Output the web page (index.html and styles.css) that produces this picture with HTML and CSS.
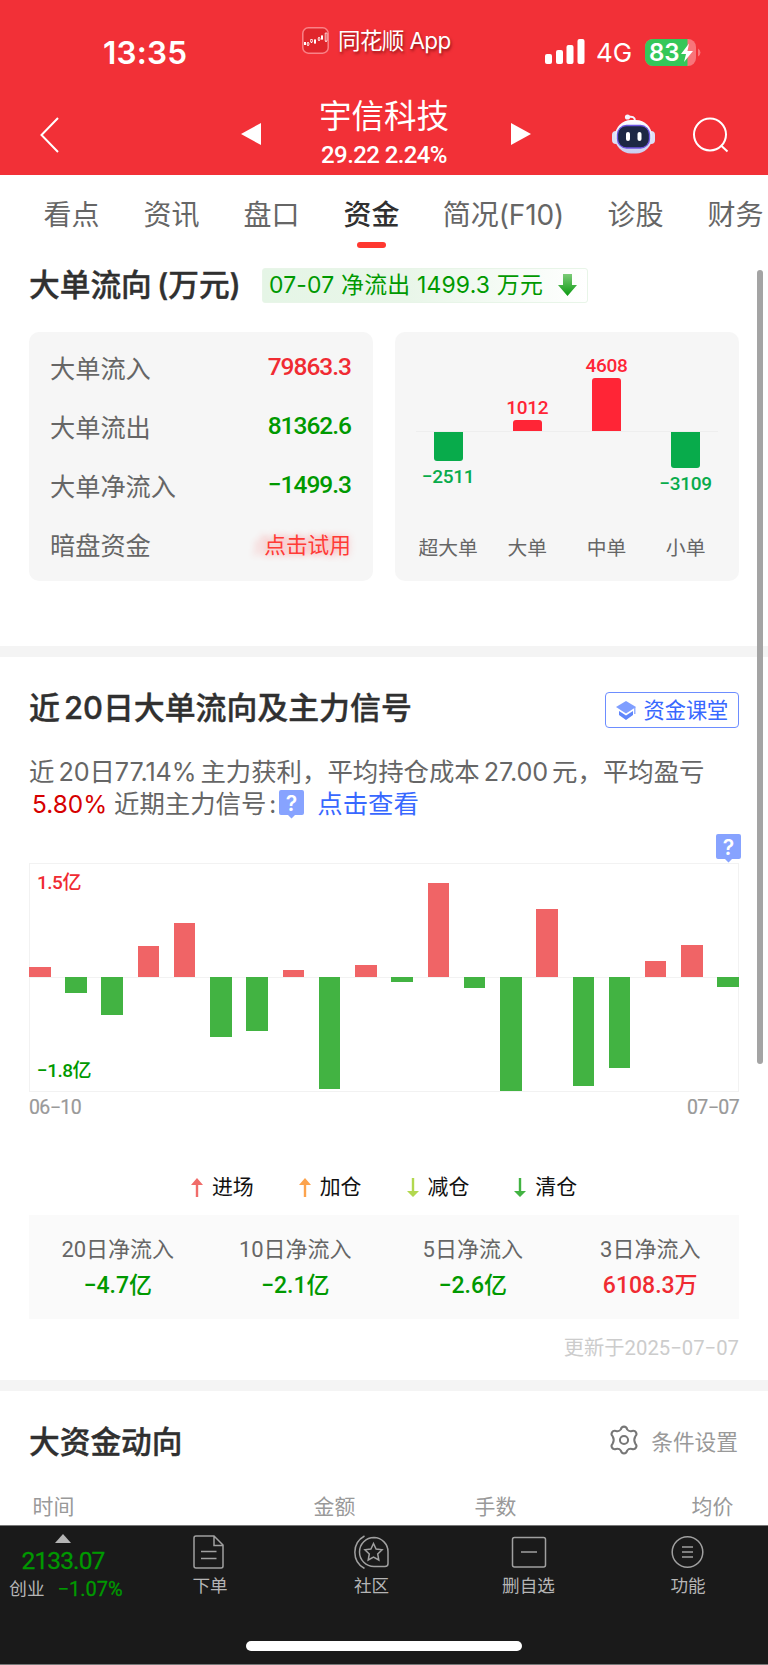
FILE: index.html
```html
<!DOCTYPE html>
<html lang="zh-CN">
<head>
    <meta charset="UTF-8">
    <title>宇信科技 - 资金</title>
    <link rel="stylesheet" href="styles.css">
</head>
<body>
<header class="header">
    <div class="status-bar">
        <div class="time">13:35</div>
        <div class="app-name">
            <svg class="app-logo" width="27" height="27" viewBox="0 0 27 27">
                <rect x=".8" y=".8" width="25.4" height="25.4" rx="5.5" fill="#e0262c" stroke="#fa8287" stroke-width="1.5"/>
                <path d="M3 15v3M6 15v4M9.500 12v4M13 12v5M17 10v4M20 8v5M24 6v9" stroke="#fff" stroke-width="1.2"/>
                <path d="M2 15h2v3h-2zM12 13h2v3h-2zM19 9h2v3h-2z" fill="#fff"/>
                <path d="M5.200 16h1.800v2h-1.800zM8.600 12.500h1.800v2.500h-1.800zM16.200 11h1.800v2h-1.800zM23.200 6h1.800v8h-1.800z" fill="#e0262c" stroke="#fff" stroke-width=".7"/>
            </svg>
            <span>同花顺 App</span>
        </div>
        <div class="signals">
            <svg width="40" height="26" viewBox="0 0 40 26" fill="#fff">
                <rect x="0" y="15" width="7" height="10" rx="2"/>
                <rect x="11" y="11" width="7" height="14" rx="2"/>
                <rect x="21.500" y="6" width="7" height="19" rx="2"/>
                <rect x="32.500" y="0" width="7" height="25" rx="2"/>
            </svg>
            <span class="network">4G</span>
            <svg class="battery" width="56" height="28" viewBox="0 0 56 28">
                <path d="M8 0h35a8 8 0 0 1 8 8v11a8 8 0 0 1-8 8h-35a8 8 0 0 1-8-8v-11a8 8 0 0 1 8-8z" fill="#f8757a"/>
                <path d="M8 0h34.500v27h-34.500a8 8 0 0 1-8-8v-11a8 8 0 0 1 8-8z" fill="#34c759"/>
                <path d="M53 9.500a4.500 4.500 0 0 1 0 8z" fill="#f8757a"/>
                <text x="4" y="22" class="battery-text">83</text>
                <path d="M44 4.500L36 15h5l-2 8 9-11h-5.500z" fill="#fff"/>
            </svg>
        </div>
    </div>
    <div class="nav-bar">
        <svg class="back" width="20" height="36" viewBox="0 0 20 36"><path d="M18 1L1.500 18 18 35" fill="none" stroke="#fff" stroke-width="2"/></svg>
        <svg class="prev" width="20" height="22" viewBox="0 0 20 22"><path d="M20 0v22L0 11z" fill="#fff"/></svg>
        <div class="stock">
            <div class="stock-name">宇信科技</div>
            <div class="stock-price">29.22 2.24%</div>
        </div>
        <svg class="next" width="20" height="22" viewBox="0 0 20 22"><path d="M0 0v22L20 11z" fill="#fff"/></svg>
        <svg class="robot" width="44" height="40" viewBox="0 0 44 40">
            <defs>
                <linearGradient id="face" x1="0" y1="0" x2="0" y2="1">
                    <stop offset="0" stop-color="#fff"/><stop offset="1" stop-color="#c9cdf0"/>
                </linearGradient>
            </defs>
            <path d="M16 3c4-1 7 0 7 4" fill="none" stroke="#f4f4ff" stroke-width="2"/>
            <circle cx="15.500" cy="3" r="2.600" fill="#f4f4ff"/>
            <rect x="0" y="17" width="8" height="13" rx="4" fill="#dcdff7"/>
            <rect x="35" y="17" width="8" height="13" rx="4" fill="#dcdff7"/>
            <rect x="3" y="6" width="37" height="33.500" rx="16" fill="url(#face)"/>
            <rect x="5.500" y="11.500" width="32" height="22.500" rx="9" fill="#1d2744" stroke="#6d55e0" stroke-width="1.300"/>
            <rect x="14" y="18" width="4" height="9" rx="2" fill="#fff"/>
            <rect x="25.500" y="18" width="4" height="9" rx="2" fill="#fff"/>
        </svg>
        <svg class="search" width="38" height="37" viewBox="0 0 38 37" fill="none" stroke="#fff" stroke-width="2">
            <circle cx="18" cy="17.500" r="16"/><path d="M29 28.500l6.500 6"/>
        </svg>
    </div>
</header>

<nav class="tabs">
    <a>看点</a>
    <a>资讯</a>
    <a>盘口</a>
    <a class="active">资金</a>
    <a class="tab-wide">简况(F10)</a>
    <a>诊股</a>
    <a>财务</a>
</nav>

<main class="content">
    <section class="flow">
        <div class="flow-title">
            <h2>大单流向 (万元)</h2>
            <div class="badge">
                <span>07-07 净流出 1499.3 万元</span>
                <svg width="19" height="22" viewBox="0 0 19 22">
                    <defs><linearGradient id="down" x1="0" y1="0" x2="0" y2="1"><stop offset="0" stop-color="#7ccb78"/><stop offset="1" stop-color="#0b9a10"/></linearGradient></defs>
                    <path d="M5 0h9v11h5L9.500 22 0 11h5z" fill="url(#down)"/>
                </svg>
            </div>
        </div>
        <div class="cards">
            <div class="card list">
                <div class="row"><span>大单流入</span><b class="red">79863.3</b></div>
                <div class="row"><span>大单流出</span><b class="green">81362.6</b></div>
                <div class="row"><span>大单净流入</span><b class="green">−1499.3</b></div>
                <div class="row"><span>暗盘资金</span><em class="try">点击试用</em></div>
            </div>
            <div class="card orders">
                <div class="order down"><div class="bar" style="height: 29px"></div><div class="value">−2511</div></div>
                <div class="order up"><div class="value">1012</div><div class="bar" style="height: 11px"></div></div>
                <div class="order up"><div class="value">4608</div><div class="bar" style="height: 53px"></div></div>
                <div class="order down"><div class="bar" style="height: 36px"></div><div class="value">−3109</div></div>
                <div class="order-name">超大单</div>
                <div class="order-name">大单</div>
                <div class="order-name">中单</div>
                <div class="order-name">小单</div>
            </div>
        </div>
    </section>

    <section class="signal">
        <div class="signal-title">
            <h2>近<i></i>20日大单流向及主力信号</h2>
            <a class="lesson">
                <svg width="20" height="19" viewBox="0 0 20 19">
                    <path d="M10 0l10 6-10 6.500L0 6z" fill="#7f9eff"/>
                    <path d="M3 10l7 4.500L17 10v4l-7 5-7-5z" fill="#5f86fb"/>
                    <path d="M18.800 6v7" stroke="#7f9eff" stroke-width="1.200"/>
                </svg>
                <span>资金课堂</span>
            </a>
        </div>
        <p class="summary">
            <span class="summary-line">近<i></i><span class="num">20</span>日<span class="num">77.14%</span><i></i>主力获利，平均持仓成本<i></i><span class="num">27.00</span><i></i>元，平均盈亏</span>
            <span class="summary-line second"><span class="percent">5.80%</span><span>近期主力信号<small>:</small></span><svg class="help" width="25" height="29" viewBox="0 0 25 29"><path d="M2 0h21a2 2 0 0 1 2 2v21a2 2 0 0 1-2 2h-7l-3.500 3.500L9 25H2a2 2 0 0 1-2-2V2a2 2 0 0 1 2-2z" fill="#87a3ff"/><text x="12.500" y="20.500" class="help-text">?</text></svg><a class="look">点击查看</a></span>
        </p>
        <svg class="help help-right" width="25" height="29" viewBox="0 0 25 29"><path d="M2 0h21a2 2 0 0 1 2 2v21a2 2 0 0 1-2 2h-7l-3.500 3.500L9 25H2a2 2 0 0 1-2-2V2a2 2 0 0 1 2-2z" fill="#87a3ff"/><text x="12.500" y="20.500" class="help-text">?</text></svg>
        <div class="chart">
            <div class="chart-max">1.5亿</div>
            <div class="chart-min">−1.8亿</div>
            <div class="bars" id="bars"></div>
        </div>
        <div class="dates"><span>06−10</span><span>07−07</span></div>
        <div class="legend">
            <div><svg width="12" height="19" viewBox="0 0 12 19" fill="#f06c6a"><path d="M6 0l6 7H7.200v12H4.800V7H0z"/></svg>进场</div>
            <div><svg width="12" height="19" viewBox="0 0 12 19" fill="#fca34d"><path d="M6 0l6 7H7.200v12H4.800V7H0z"/></svg>加仓</div>
            <div><svg width="12" height="19" viewBox="0 0 12 19" fill="#b2d84f"><path d="M6 19l6-6H7.200V0H4.800v13H0z"/></svg>减仓</div>
            <div><svg width="12" height="19" viewBox="0 0 12 19" fill="#42b342"><path d="M6 19l6-6H7.200V0H4.800v13H0z"/></svg>清仓</div>
        </div>
        <div class="totals">
            <div><span>20日净流入</span><b class="green">−4.7亿</b></div>
            <div><span>10日净流入</span><b class="green">−2.1亿</b></div>
            <div><span>5日净流入</span><b class="green">−2.6亿</b></div>
            <div><span>3日净流入</span><b class="red">6108.3万</b></div>
        </div>
        <div class="updated">更新于2025−07−07</div>
    </section>

    <section class="funds">
        <div class="funds-title">
            <h2>大资金动向</h2>
            <div class="settings">
                <svg width="30" height="30" viewBox="0 0 28 28" fill="none" stroke="#777" stroke-width="1.900" stroke-linejoin="round">
                    <path d="M11 4.200Q11.600 1.500 14 1.500T17 4.200Q18.700 6.400 21.500 5.600Q24 4.900 25.200 6.900T24.600 10.600Q22.600 14 24.600 17.400Q26.400 19.100 25.200 21.100T21.500 22.400Q18.700 21.600 17 23.800Q16.400 26.500 14 26.500T11 23.800Q9.300 21.600 6.500 22.400Q4 23.100 2.800 21.100T3.400 17.400Q5.400 14 3.400 10.600Q1.600 8.900 2.800 6.900T6.500 5.600Q9.300 6.400 11 4.200z"/>
                    <circle cx="14" cy="14" r="3.800"/>
                </svg>
                <span>条件设置</span>
            </div>
        </div>
        <div class="table-head"><span>时间</span><span>金额</span><span>手数</span><span>均价</span></div>
    </section>
    <div class="scrollbar"></div>
</main>

<footer class="footer">
    <div class="index">
        <svg width="16" height="9" viewBox="0 0 16 9"><path d="M8 0l8 9H0z" fill="#b5b5b5"/></svg>
        <div class="index-value">2133.07</div>
        <div class="index-change"><span>创业</span><b>−1.07%</b></div>
    </div>
    <div class="menu">
        <svg width="36" height="34" viewBox="0 0 36 34">
            <path d="M4 1h18l9 9v21q0 2-2 2H4q-2 0-2-2V3q0-2 2-2zM22 1v9.500H31M9 16.500h15.500M9 23.500h15.500"/>
        </svg>
        <span>下单</span>
    </div>
    <div class="menu">
        <svg width="36" height="34" viewBox="0 0 36 34">
            <path d="M20 2.500a14.500 14.500 0 0 0 0 29h11q3 0 3-3V17A14.300 14.300 0 0 0 20 2.500zM10.500 1A18.500 18.500 0 0 0 10.500 33.500"/>
            <path d="M19.500 8.500l2.600 5.500 6 .8-4.400 4.200 1.100 6-5.300-2.900-5.300 2.900 1.100-6-4.400-4.200 6-.8z"/>
        </svg>
        <span>社区</span>
    </div>
    <div class="menu">
        <svg width="36" height="34" viewBox="0 0 36 34"><rect x="1.500" y="2.500" width="33" height="29.500" rx="2"/><path d="M10 17h16"/></svg>
        <span>删自选</span>
    </div>
    <div class="menu">
        <svg width="36" height="34" viewBox="0 0 36 34"><circle cx="17.500" cy="17" r="15.300"/><path d="M12 12h11M12 17h11M12 22h11"/></svg>
        <span>功能</span>
    </div>
    <div class="home-line"></div>
</footer>

<script>
    // 柱子高度: 正数为流入, 负数为流出
    const flows = [10, -15.5, -38, 31, 54.5, -60, -54, 7, -112, 12, -4.5, 94, -10.5, -114, 68, -109, -91, 16, 32.5, -9.5];
    const bars = document.getElementById('bars');
    flows.forEach(function (value) {
        const bar = document.createElement('div');
        bar.className = value > 0 ? 'flow-bar in' : 'flow-bar out';
        bar.style.height = Math.abs(value) + 'px';
        bars.appendChild(bar);
    });
</script>
</body>
</html>
```
FILE: styles.css
```css
* {
    box-sizing: border-box;
}

body {
    margin: 0;
    width: 768px;
    height: 1665px;
    overflow: hidden;
    background: #fff;
    color: #666;
    font-family: Inter, "Noto Sans CJK SC", sans-serif;
    font-size: 25px;
}

svg {
    display: block;
    flex: none;
}

h2 {
    margin: 0;
    color: #303030;
    font-size: 30.7px;
    font-weight: 500;
    line-height: 36px;
    white-space: nowrap;
    -webkit-text-stroke: 0.4px #303030;
}

b {
    font-weight: 500;
}

.red {
    color: #f02b32;
}

.green {
    color: #090;
}

/* header */
.header {
    height: 174.5px;
    background: #f23037;
    color: #fff;
}

.status-bar {
    display: grid;
    grid-template-columns: 199px 243px 1fr;
    height: 100px;
    padding-left: 103px;
}

.time {
    padding-top: 34px;
    font-size: 31.5px;
    font-weight: 600;
    line-height: 38px;
    letter-spacing: 0.2px;
}

.app-name {
    display: flex;
    gap: 9px;
    padding-top: 27px;
    font-size: 22.5px;
    line-height: 28px;
    white-space: nowrap;
    letter-spacing: -0.6px;
    text-shadow: 1px 2px 3px rgba(80, 0, 0, 0.6);
}

.signals {
    display: flex;
    padding-top: 38.5px;
}

.network {
    margin-left: 11px;
    width: 49px;
    font-size: 26px;
    line-height: 28px;
}

.battery-text {
    fill: #fff;
    font-size: 24px;
    font-weight: 600;
}

.nav-bar {
    display: flex;
    padding-left: 39.5px;
}

.back {
    margin-top: 17px;
}

.prev {
    margin: 23px 0 0 181.5px;
}

.stock {
    width: 250px;
    padding-right: 4px;
    text-align: center;
}

.stock-name {
    margin-top: -2px;
    font-size: 32.5px;
    line-height: 38px;
}

.stock-price {
    margin-top: 5px;
    font-family: Roboto, sans-serif;
    font-size: 24px;
    font-weight: 500;
    line-height: 28px;
    letter-spacing: -0.6px;
}

.next {
    margin-top: 23px;
}

.robot {
    margin: 14px 0 0 81px;
}

.search {
    margin: 17px 0 0 36px;
}

/* tabs */
.tabs {
    display: flex;
    gap: 44px;
    height: 83px;
    padding: 20px 0 0 43.5px;
    font-size: 28px;
    line-height: 40px;
    white-space: nowrap;
    overflow: hidden;
}

.tabs a {
    display: flex;
    flex: none;
    flex-direction: column;
    align-items: center;
    width: 56px;
}

.tabs .tab-wide {
    width: 120px;
    letter-spacing: -0.1px;
}

.tabs .active {
    color: #303030;
    font-weight: 500;
}

.tabs .active::after {
    content: "";
    width: 29px;
    height: 6px;
    margin-top: 7px;
    border-radius: 3px;
    background: #ff3830;
}

/* big orders */
.content {
    position: relative;
    height: 1267.5px;
    overflow: hidden;
}

.flow {
    height: 388.5px;
    padding: 10px 29px 0;
}

.flow-title {
    display: flex;
    gap: 22px;
}

.flow-title h2 {
    width: 211px;
    margin-top: -1px;
    word-spacing: -3px;
}

.badge {
    display: flex;
    align-items: center;
    justify-content: space-between;
    width: 326px;
    height: 35px;
    padding: 0 10px 0 6px;
    border: 1px solid #e8f5e8;
    border-radius: 3px;
    background: linear-gradient(90deg, #e5f5e6, #e9f6e9 45%, #fff);
    color: #090;
    font-size: 22.9px;
    line-height: 32px;
    letter-spacing: 0.2px;
    white-space: nowrap;
}

.cards {
    display: grid;
    grid-template-columns: 344px 344px;
    gap: 22px;
    margin-top: 29.5px;
}

.card {
    height: 249px;
    border-radius: 10px;
    background: #f6f6f6;
}

.list {
    padding: 5px 22px 0 21px;
}

.row {
    display: flex;
    align-items: center;
    justify-content: space-between;
    height: 59px;
    font-size: 25.2px;
}

.row b {
    margin-top: -1px;
    font-family: Roboto, sans-serif;
    font-size: 24.5px;
    letter-spacing: -1px;
}

.try {
    margin-top: -1px;
    color: #ff3b36;
    font-size: 21.7px;
    font-style: normal;
    text-shadow: -12px 0 6px rgba(255, 60, 60, 0.3), 0 0 7px rgba(255, 60, 60, 0.35);
}

.orders {
    display: grid;
    grid-template-columns: repeat(4, 79.2px);
    grid-template-rows: 158px 1fr;
    padding: 20px 0 0 13.5px;
    background: linear-gradient(#eee, #eee) 21px 99px / 302px 1px no-repeat #f6f6f6;
}

.order {
    display: flex;
    flex-direction: column;
    align-items: center;
    font-family: Roboto, sans-serif;
    font-size: 19px;
    font-weight: 500;
    line-height: 24px;
    letter-spacing: -0.3px;
}

.order .bar {
    width: 29px;
}

.up {
    justify-content: flex-end;
    padding-bottom: 79px;
    color: #ff2536;
}

.up .bar {
    border-radius: 3px 3px 0 0;
    background: #ff2536;
}

.down {
    padding-top: 80px;
    color: #08ab4b;
}

.down .bar {
    border-radius: 0 0 3px 3px;
    background: #08ab4b;
}

.down .value {
    margin-top: 4px;
}

.order-name {
    padding-top: 24px;
    font-size: 19.8px;
    line-height: 28px;
    text-align: center;
}

/* 20 days */
.signal {
    height: 734px;
    padding: 0 29px;
    border-top: 11px solid #f4f4f4;
}

.signal i {
    display: inline-block;
    width: 4px;
}

.signal-title {
    display: flex;
    justify-content: space-between;
    padding-top: 35px;
    height: 95px;
}

.signal-title h2 {
    margin-top: -2px;
    font-size: 30.9px;
}

.lesson {
    display: flex;
    align-items: center;
    gap: 7.5px;
    width: 134px;
    height: 36px;
    padding: 0 10px;
    border: 1.5px solid #6d8dff;
    border-radius: 4px;
    color: #3868ff;
    font-size: 21.2px;
    line-height: 32px;
    white-space: nowrap;
}

.summary {
    margin: 4px 0 0;
    font-size: 25.4px;
    line-height: 32px;
}

.summary-line {
    display: flex;
    align-items: center;
    height: 32px;
    white-space: nowrap;
}

.num {
    font-size: 25.2px;
    letter-spacing: -0.1px;
}

.second {
    padding-left: 3px;
}

.percent {
    width: 82px;
    color: #d60000;
    font-size: 24.4px;
}

.summary small {
    margin: 0 3px;
    font-size: 24px;
}

.help-text {
    fill: #fff;
    font-size: 21px;
    font-weight: 600;
    text-anchor: middle;
}

.look {
    margin-left: 13px;
    color: #3868ff;
}

.help-right {
    margin: 14px -2px 0 auto;
}

.chart {
    position: relative;
    width: 710px;
    height: 229px;
    border: 1px solid #f2f2f2;
    background: linear-gradient(#f2f2f2, #f2f2f2) 0 113px / 100% 1px no-repeat;
    font-family: Roboto, "Noto Sans CJK SC", sans-serif;
    font-size: 19px;
    font-weight: 500;
    line-height: 24px;
    letter-spacing: -0.5px;
}

.chart-max {
    position: absolute;
    top: 7px;
    left: 7px;
    color: #f02b32;
}

.chart-min {
    position: absolute;
    bottom: 8px;
    left: 7px;
    color: #090;
}

.bars {
    display: flex;
    justify-content: space-between;
    align-items: flex-end;
    height: 113px;
    margin: 0 -1px;
}

.flow-bar {
    width: 21.5px;
}

.in {
    background: #f06466;
}

.out {
    align-self: flex-start;
    margin-top: 113px;
    flex: none;
    background: #42b342;
}

.dates {
    display: flex;
    justify-content: space-between;
    margin-top: 3px;
    color: #999;
    font-family: Roboto, sans-serif;
    font-size: 19.5px;
    line-height: 26px;
    letter-spacing: -0.6px;
    -webkit-text-stroke: 0.2px #999;
}

.legend {
    display: flex;
    justify-content: center;
    gap: 45px;
    margin-top: 51px;
    color: #111;
    font-size: 20.9px;
    line-height: 30px;
}

.legend div {
    display: flex;
    align-items: center;
    gap: 9px;
}

.totals {
    display: grid;
    grid-template-columns: repeat(4, 1fr);
    height: 104px;
    margin-top: 13px;
    padding-top: 17px;
    background: #fafafa;
    font-family: Roboto, "Noto Sans CJK SC", sans-serif;
    font-size: 22px;
    line-height: 35px;
    text-align: center;
}

.totals span,
.totals b {
    display: block;
}

.totals b {
    margin-top: 1px;
    font-size: 23px;
}

.updated {
    margin-top: 14px;
    color: #ccc;
    font-family: Roboto, "Noto Sans CJK SC", sans-serif;
    font-size: 20.3px;
    line-height: 30px;
    text-align: right;
}

/* big funds */
.funds {
    border-top: 11px solid #f4f4f4;
    padding: 33px 29px 0;
}

.funds-title,
.settings {
    display: flex;
    align-items: center;
    justify-content: space-between;
    height: 36px;
}

.settings {
    gap: 12px;
    color: #999;
    font-size: 21.7px;
    padding: 0 1px 4px 0;
}

.table-head {
    display: grid;
    grid-template-columns: 281px 161px 217px 1fr;
    padding: 32px 0 0 3.5px;
    color: #999;
    font-size: 20.9px;
    line-height: 30px;
}

.scrollbar {
    position: absolute;
    top: 12px;
    right: 5px;
    width: 6px;
    height: 794px;
    border-radius: 3px;
    background: #a4a4a4;
}

/* footer */
.footer {
    display: grid;
    grid-template-columns: 126px 168px 155px 159px 160px;
    grid-template-rows: 115px 1fr;
    height: 140px;
    border-top: 1px solid #777;
    border-bottom: 1px solid #777;
    background: #1a1a1a;
    color: #b5b5b5;
    font-size: 17.6px;
}

.index {
    display: flex;
    flex-direction: column;
    align-items: center;
    padding-top: 8px;
    font-family: Roboto, "Noto Sans CJK SC", sans-serif;
}

.index-value {
    margin-top: 4px;
    color: #090;
    font-size: 24.5px;
    line-height: 28px;
    letter-spacing: -0.9px;
    -webkit-text-stroke: 0.3px #090;
}

.index-change {
    display: flex;
    gap: 13px;
    padding-left: 6px;
    line-height: 28px;
}

.index-change b {
    color: #090;
    font-size: 20px;
    font-weight: 400;
    -webkit-text-stroke: 0.3px #090;
}

.menu {
    display: flex;
    flex-direction: column;
    align-items: center;
    padding-top: 9px;
    line-height: 30px;
}

.menu svg {
    margin-bottom: 2px;
    fill: none;
    stroke: #a0a0a0;
    stroke-width: 1.5;
}

.home-line {
    grid-column: 1 / -1;
    width: 276px;
    height: 10px;
    margin: 0 auto;
    border-radius: 5px;
    background: #fff;
}
```
